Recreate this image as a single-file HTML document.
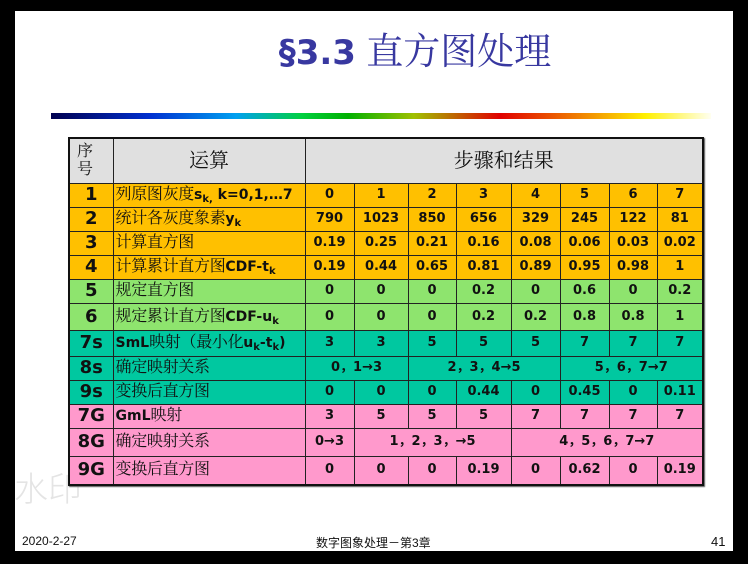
<!DOCTYPE html>
<html><head><meta charset="utf-8"><style>
*{margin:0;padding:0;box-sizing:border-box}
body{width:748px;height:564px;background:#000;position:relative;overflow:hidden;font-family:"Liberation Sans","Noto Sans CJK SC",sans-serif}
.slide{position:absolute;left:15px;top:11px;width:718px;height:540px;background:#fff}
.title{position:absolute;left:0;width:748px;top:29px;text-align:center;color:#3838a0;font-size:37px;line-height:46px;padding-left:82px;white-space:nowrap}
.title b{font-family:"DejaVu Sans","Liberation Sans",sans-serif;font-size:34px}
.title span{font-family:"Liberation Serif","Noto Serif CJK SC",serif}
.bar{position:absolute;left:51px;top:113px;width:660px;height:6px;background:linear-gradient(90deg,#000050 0%,#0030d0 15%,#00a0f0 28%,#00d040 38%,#00b000 45%,#a0c000 55%,#e00000 68%,#f08000 80%,#fff000 90%,#fffff0 100%)}
table{position:absolute;left:68px;top:137px;width:636px;border-collapse:collapse;table-layout:fixed;border:2.5px solid #111;box-shadow:1px 1px 1px #555}
td{border:1px solid #222;text-align:center;font-weight:bold;font-size:13px;line-height:14px;color:#111;padding:0;white-space:nowrap;overflow:hidden;vertical-align:middle;font-family:"DejaVu Sans","Liberation Sans","Noto Sans CJK SC",sans-serif}
td.op{text-align:left;font-weight:normal;font-family:"Liberation Serif","Noto Serif CJK SC",serif;font-size:16px;padding-left:2px;letter-spacing:-0.3px}
td.op b{font-family:"DejaVu Sans","Liberation Sans",sans-serif;font-weight:bold;font-size:14px;letter-spacing:0}
td.n{font-size:18px}
sub{font-size:10px;line-height:0;vertical-align:-3px}
.h td{background:#e0e0e0;font-weight:normal;font-family:"Liberation Serif","Noto Serif CJK SC",serif;font-size:20px;line-height:22px}
.o td{background:#ffc000}.g td{background:#8ee46e}.t td{background:#00c8a0}.p td{background:#ff99cc}
.foot{position:absolute;top:534px;font-size:12px;color:#111;font-family:"Liberation Sans","Noto Sans CJK SC",sans-serif}
.wm{position:absolute;left:14px;top:462px;font-size:34px;color:#e4e4e4;font-family:"Noto Sans CJK SC",sans-serif;font-weight:300}
</style></head><body>
<div class="slide"></div>
<div class="title"><b>§3.3</b> <span>直方图处理</span></div>
<div class="bar"></div>
<div class="wm">水印</div>
<table>
<colgroup><col style="width:44px"><col style="width:192px"><col style="width:49px"><col style="width:54px"><col style="width:48px"><col style="width:55px"><col style="width:49px"><col style="width:49px"><col style="width:48px"><col style="width:46px"></colgroup>
<tr class="h" style="height:45px"><td style="font-size:16px;line-height:18px;text-align:left;padding-left:7px">序<br>号</td><td>运算</td><td colspan="8">步骤和结果</td></tr>
<tr class="o" style="height:24px"><td class="n">1</td><td class="op">列原图灰度<b>s<sub>k,</sub> k=0,1,…7</b></td><td>0</td><td>1</td><td>2</td><td>3</td><td>4</td><td>5</td><td>6</td><td>7</td></tr>
<tr class="o" style="height:24px"><td class="n">2</td><td class="op">统计各灰度象素<b>y<sub>k</sub></b></td><td>790</td><td>1023</td><td>850</td><td>656</td><td>329</td><td>245</td><td>122</td><td>81</td></tr>
<tr class="o" style="height:24px"><td class="n">3</td><td class="op">计算直方图</td><td>0.19</td><td>0.25</td><td>0.21</td><td>0.16</td><td>0.08</td><td>0.06</td><td>0.03</td><td>0.02</td></tr>
<tr class="o" style="height:24px"><td class="n">4</td><td class="op">计算累计直方图<b>CDF-t<sub>k</sub></b></td><td>0.19</td><td>0.44</td><td>0.65</td><td>0.81</td><td>0.89</td><td>0.95</td><td>0.98</td><td>1</td></tr>
<tr class="g" style="height:24px"><td class="n">5</td><td class="op">规定直方图</td><td>0</td><td>0</td><td>0</td><td>0.2</td><td>0</td><td>0.6</td><td>0</td><td>0.2</td></tr>
<tr class="g" style="height:27px"><td class="n">6</td><td class="op">规定累计直方图<b>CDF-u<sub>k</sub></b></td><td>0</td><td>0</td><td>0</td><td>0.2</td><td>0.2</td><td>0.8</td><td>0.8</td><td>1</td></tr>
<tr class="t" style="height:26px"><td class="n">7s</td><td class="op"><b>SmL</b>映射（最小化<b>u<sub>k</sub>-t<sub>k</sub>)</b></td><td>3</td><td>3</td><td>5</td><td>5</td><td>5</td><td>7</td><td>7</td><td>7</td></tr>
<tr class="t" style="height:24px"><td class="n">8s</td><td class="op">确定映射关系</td><td colspan="2">0，1→3</td><td colspan="3">2，3，4→5</td><td colspan="3">5，6，7→7</td></tr>
<tr class="t" style="height:24px"><td class="n">9s</td><td class="op">变换后直方图</td><td>0</td><td>0</td><td>0</td><td>0.44</td><td>0</td><td>0.45</td><td>0</td><td>0.11</td></tr>
<tr class="p" style="height:24px"><td class="n">7G</td><td class="op"><b>GmL</b>映射</td><td>3</td><td>5</td><td>5</td><td>5</td><td>7</td><td>7</td><td>7</td><td>7</td></tr>
<tr class="p" style="height:28px"><td class="n">8G</td><td class="op">确定映射关系</td><td>0→3</td><td colspan="3">1，2，3，→5</td><td colspan="4">4，5，6，7→7</td></tr>
<tr class="p" style="height:29px"><td class="n">9G</td><td class="op">变换后直方图</td><td>0</td><td>0</td><td>0</td><td>0.19</td><td>0</td><td>0.62</td><td>0</td><td>0.19</td></tr>
</table>
<div class="foot" style="left:22px">2020-2-27</div>
<div class="foot" style="left:316px">数字图象处理－第3章</div>
<div class="foot" style="left:711px;font-size:13px">41</div>
</body></html>
